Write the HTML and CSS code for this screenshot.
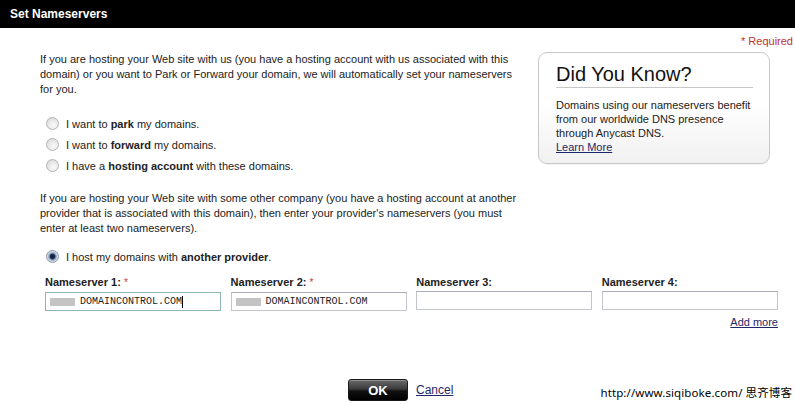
FILE: index.html
```html
<!DOCTYPE html>
<html>
<head>
<meta charset="utf-8">
<link rel="stylesheet" href="styles.css">
</head>
<body>
<div class="header">Set Nameservers</div>
<div class="required">* Required</div>
<div class="top">
  <div class="intro">
    <p class="para p1">If you are hosting your Web site with us (you have a hosting account with us associated with this domain) or you want to Park or Forward your domain, we will automatically set your nameservers for you.</p>
    <div class="radios">
      <label class="opt"><span class="radio"></span><span>I want to <b>park</b> my domains.</span></label>
      <label class="opt"><span class="radio"></span><span>I want to <b>forward</b> my domains.</span></label>
      <label class="opt"><span class="radio"></span><span>I have a <b>hosting account</b> with these domains.</span></label>
    </div>
    <p class="para p2">If you are hosting your Web site with some other company (you have a hosting account at another provider that is associated with this domain), then enter your provider's nameservers (you must enter at least two nameservers).</p>
    <label class="opt opt-last"><span class="radio checked"></span><span>I host my domains with <b>another provider</b>.</span></label>
  </div>
  <aside class="dyk">
    <h2 class="dyk-title">Did You Know?</h2>
    <p class="dyk-text">Domains using our nameservers benefit from our worldwide DNS presence through Anycast DNS.<br><a href="#" class="link">Learn More</a></p>
  </aside>
</div>
<div class="ns-row">
  <div class="field">
    <div class="flabel">Nameserver 1: <span class="star">*</span></div>
    <div class="input focus"><span class="blur"></span>DOMAINCONTROL.COM<span class="caret"></span></div>
  </div>
  <div class="field">
    <div class="flabel">Nameserver 2: <span class="star">*</span></div>
    <div class="input"><span class="blur"></span>DOMAINCONTROL.COM</div>
  </div>
  <div class="field">
    <div class="flabel">Nameserver 3:</div>
    <div class="input"></div>
  </div>
  <div class="field">
    <div class="flabel">Nameserver 4:</div>
    <div class="input"></div>
  </div>
</div>
<div class="addmore"><a href="#" class="link">Add more</a></div>
<div class="actions">
  <button class="ok">OK</button>
  <a href="#" class="link cancel">Cancel</a>
</div>
<div class="watermark">http://www.siqiboke.com/ 思齐博客</div>
</body>
</html>
```
FILE: styles.css
```css
html, body {
  margin: 0;
  padding: 0;
  background: #fff;
}
body {
  font-family: "Liberation Sans", Arial, sans-serif;
  font-size: 11px;
  color: #222;
  width: 795px;
  height: 404px;
  position: relative;
  overflow: hidden;
}
.header {
  height: 28px;
  line-height: 28px;
  background: #000;
  color: #fff;
  font-weight: bold;
  font-size: 12px;
  padding-left: 10px;
}
.required {
  text-align: right;
  color: #c2302a;
  line-height: 14px;
  padding-right: 2px;
  margin-top: 6px;
  height: 14px;
}
.top {
  display: flex;
  align-items: flex-start;
  padding-left: 40px;
  margin-top: 4px;
}
.intro {
  width: 482px;
  margin-right: 16px;
}
.para {
  margin: 0;
  line-height: 15px;
}
.radios {
  margin-top: 16px;
}
.opt {
  display: flex;
  align-items: center;
  height: 21px;
  padding-left: 6px;
}
.opt-last {
  margin-top: 10px;
}
.p2 {
  margin-top: 15px;
}
.radio {
  width: 11px;
  height: 11px;
  border-radius: 50%;
  border: 1px solid #b4b4b4;
  background: radial-gradient(circle at 60% 65%, #fafafa 0%, #e6e6e6 55%, #cfcfcf 100%);
  margin-right: 7px;
  flex: none;
}
.radio.checked {
  border-color: #8a96a6;
  background: radial-gradient(circle at 50% 50%, #0c1a33 0%, #1b2e52 28%, #8fa3bf 45%, #e2e7ee 70%, #c6ced9 100%);
}
.dyk {
  width: 197px;
  height: 110px;
  border: 1px solid #c8c8c8;
  border-radius: 9px;
  background: linear-gradient(#fff 0%, #fff 45%, #f1f1f1 100%);
  padding: 0 16px 0 17px;
  box-shadow: 0 1px 1px rgba(0,0,0,0.05);
}
.dyk-title {
  margin: 9px 0 0;
  font-weight: normal;
  font-size: 20px;
  line-height: 25px;
  color: #111;
  border-bottom: 1px solid #c8c8c8;
}
.dyk-text {
  margin: 10px 0 0;
  line-height: 14px;
}
.link {
  color: #1f2766;
  text-decoration: underline;
}
.ns-row {
  display: grid;
  grid-template-columns: repeat(4, 176px);
  column-gap: 9.6px;
  padding-left: 45px;
  margin-top: 8px;
}
.flabel {
  font-weight: bold;
  line-height: 14px;
  color: #222;
}
.star {
  font-weight: normal;
  color: #d04040;
  font-size: 10px;
}
.input {
  margin-top: 2px;
  height: 17px;
  border: 1px solid #c2c6cc;
  border-top-color: #a9adb3;
  display: flex;
  align-items: center;
  font-family: "Liberation Mono", "Courier New", monospace;
  font-size: 10px;
  color: #222;
  padding-left: 4px;
}
.input.focus {
  border-color: #8fb5b0;
}
.blur {
  width: 25px;
  height: 8px;
  background: #c4c4c4;
  margin-right: 5px;
}
.caret {
  width: 1px;
  height: 12px;
  background: #000;
}
.addmore {
  text-align: right;
  padding-right: 17px;
  margin-top: 4px;
  line-height: 14px;
}
.actions {
  display: flex;
  align-items: center;
  padding-left: 348px;
  margin-top: 50px;
}
.ok {
  width: 60px;
  height: 22px;
  border: 1px solid #1a1a1a;
  border-radius: 3px;
  background: linear-gradient(#6a6a6a 0%, #3a3a3a 45%, #111 55%, #000 100%);
  color: #fff;
  font-family: "Liberation Sans", Arial, sans-serif;
  font-weight: bold;
  font-size: 13px;
  padding: 0;
  box-shadow: inset 0 1px 0 rgba(255,255,255,0.25);
}
.cancel {
  margin-left: 8px;
  font-size: 12px;
}
.watermark {
  position: absolute;
  right: 3px;
  top: 385px;
  font-family: "Noto Sans", "Noto Sans CJK SC", sans-serif;
  font-size: 11.5px;
  letter-spacing: 0.1px;
  line-height: 16px;
  color: #000;
  white-space: nowrap;
}
```
